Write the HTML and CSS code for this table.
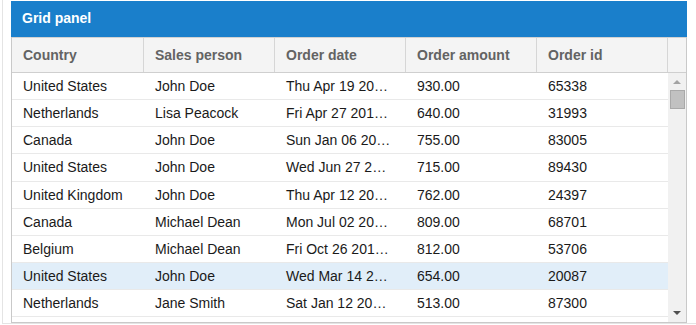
FILE: index.html
```html
<!DOCTYPE html>
<html>
<head>
<meta charset="utf-8">
<link rel="stylesheet" href="styles.css">
</head>
<body>
<div class="frame">
  <div class="panel">
    <div class="title">Grid panel</div>
    <div class="head">
      <div class="hcell c1">Country</div>
      <div class="hcell">Sales person</div>
      <div class="hcell">Order date</div>
      <div class="hcell">Order amount</div>
      <div class="hcell">Order id</div>
      <div class="hcell last"></div>
    </div>
    <div class="body">
      <div class="rows">
        <div class="row"><div class="cell c1">United States</div><div class="cell">John Doe</div><div class="cell">Thu Apr 19 2012 00:00:00</div><div class="cell">930.00</div><div class="cell">65338</div></div>
        <div class="row"><div class="cell c1">Netherlands</div><div class="cell">Lisa Peacock</div><div class="cell">Fri Apr 27 2012 00:00:00</div><div class="cell">640.00</div><div class="cell">31993</div></div>
        <div class="row"><div class="cell c1">Canada</div><div class="cell">John Doe</div><div class="cell">Sun Jan 06 2013 00:00:00</div><div class="cell">755.00</div><div class="cell">83005</div></div>
        <div class="row"><div class="cell c1">United States</div><div class="cell">John Doe</div><div class="cell">Wed Jun 27 2012 00:00:00</div><div class="cell">715.00</div><div class="cell">89430</div></div>
        <div class="row"><div class="cell c1">United Kingdom</div><div class="cell">John Doe</div><div class="cell">Thu Apr 12 2012 00:00:00</div><div class="cell">762.00</div><div class="cell">24397</div></div>
        <div class="row"><div class="cell c1">Canada</div><div class="cell">Michael Dean</div><div class="cell">Mon Jul 02 2012 00:00:00</div><div class="cell">809.00</div><div class="cell">68701</div></div>
        <div class="row"><div class="cell c1">Belgium</div><div class="cell">Michael Dean</div><div class="cell">Fri Oct 26 2012 00:00:00</div><div class="cell">812.00</div><div class="cell">53706</div></div>
        <div class="row selected"><div class="cell c1">United States</div><div class="cell">John Doe</div><div class="cell">Wed Mar 14 2012 00:00:00</div><div class="cell">654.00</div><div class="cell">20087</div></div>
        <div class="row"><div class="cell c1">Netherlands</div><div class="cell">Jane Smith</div><div class="cell">Sat Jan 12 2013 00:00:00</div><div class="cell">513.00</div><div class="cell">87300</div></div>
      </div>
      <div class="scrollbar">
        <div class="arrow up"></div>
        <div class="track"><div class="thumb"></div></div>
        <div class="arrow down"></div>
      </div>
    </div>
  </div>
</div>
</body>
</html>
```
FILE: styles.css
```css
html, body {
  margin: 0;
  padding: 0;
  background: #ffffff;
}
body {
  font-family: "Liberation Sans", Arial, sans-serif;
  font-size: 14px;
}
.frame {
  margin-left: 2px;
  width: 690px;
  padding: 1px 0 0 8px;
  border-left: 1px solid #e4e4e4;
  border-bottom: 1px solid #e4e4e4;
}
.panel {
  width: 674px;
  border: 1px solid #c9c9c9;
  border-top: none;
}
.title {
  margin: 0 -1px;
  height: 36px;
  line-height: 35px;
  padding-left: 11px;
  background: #1a7fcb;
  color: #ffffff;
  font-weight: bold;
  font-size: 14px;
}
.head {
  display: grid;
  grid-template-columns: 132px 131px 131px 131px 131px 18px;
  height: 34px;
  background: #f4f4f4;
  border-top: 1px solid #d2d2d2;
  border-bottom: 1px solid #cfcfcf;
}
.hcell {
  border-right: 1px solid #d6d6d6;
  padding-left: 11px;
  line-height: 34px;
  color: #636363;
  font-weight: bold;
  white-space: nowrap;
  overflow: hidden;
}
.hcell.last {
  border-right: none;
  padding: 0;
}
.body {
  display: flex;
  height: 249px;
}
.rows {
  width: 656px;
  overflow: hidden;
}
.row {
  display: grid;
  grid-template-columns: 132px 131px 131px 131px 131px;
  height: 26.125px;
  border-bottom: 1px solid #e9e9e9;
}
.row.selected {
  background: #e1eef9;
}
.cell {
  padding: 0 14px 0 11px;
  line-height: 27px;
  color: #1a1a1a;
  white-space: nowrap;
  overflow: hidden;
  text-overflow: ellipsis;
}
.scrollbar {
  width: 18px;
  background: #f1f1f1;
  display: flex;
  flex-direction: column;
  align-items: center;
}
.arrow {
  width: 0;
  height: 0;
  border-left: 4px solid transparent;
  border-right: 4px solid transparent;
}
.arrow.up {
  margin-top: 7px;
  border-bottom: 4px solid #a3a3a3;
}
.arrow.down {
  margin-bottom: 7px;
  border-top: 4px solid #505050;
}
.track {
  flex: 1;
  width: 100%;
  display: flex;
  justify-content: center;
  padding-top: 6px;
}
.thumb {
  width: 13px;
  height: 17px;
  background: #c1c1c1;
  border: 1px solid #a9a9a9;
}
```
